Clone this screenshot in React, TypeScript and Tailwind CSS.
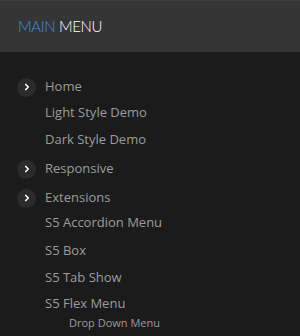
import { ChevronRight } from "lucide-react";

// spacing between rows in the reference is uneven, so each row carries its own top margin
const items = [
  { name: "Home", arrow: true, gap: "mt-0" },
  { name: "Light Style Demo", gap: "mt-[6px]" },
  { name: "Dark Style Demo", gap: "mt-[7px]" },
  { name: "Responsive", arrow: true, gap: "mt-[9px]" },
  { name: "Extensions", arrow: true, gap: "mt-[9px]" },
  { name: "S5 Accordion Menu", gap: "mt-[5px]" },
  { name: "S5 Box", gap: "mt-[8px]" },
  { name: "S5 Tab Show", gap: "mt-[7px]" },
  { name: "S5 Flex Menu", gap: "mt-[6px]" },
];

export default function App() {
  return (
    <div className="w-[300px] h-[336px] bg-[#1b1b1b] overflow-hidden" style={{ fontFamily: "'Open Sans', sans-serif" }}>
      {/* Header */}
      <div className="h-[52px] bg-[#353535] border-t border-[#3e3e3e] flex items-center pl-[18px]">
        <h1 className="text-[15px] font-light tracking-tight" style={{ fontFamily: "Lato, sans-serif" }}>
          <span className="text-[#3d8fd6]">MAIN</span> <span className="text-white">MENU</span>
        </h1>
      </div>

      {/* Menu */}
      <ul className="pt-[25px]">
        {items.map((item) => (
          <li key={item.name} className={`h-[20px] flex items-center ${item.gap}`}>
            <span className="w-[45px] pl-[17px] flex items-center">
              {item.arrow && (
                <span className="w-[19px] h-[19px] rounded-full bg-[#2b2b2b] flex items-center justify-center">
                  <ChevronRight className="w-[10px] h-[10px] text-white" strokeWidth={4} />
                </span>
              )}
            </span>
            <span className="text-[13px] text-[#9b9b9b]">{item.name}</span>
          </li>
        ))}
        <li className="mt-[1px] pl-[69px] text-[11px] text-[#9b9b9b] leading-[16px]">Drop Down Menu</li>
      </ul>
    </div>
  );
}
